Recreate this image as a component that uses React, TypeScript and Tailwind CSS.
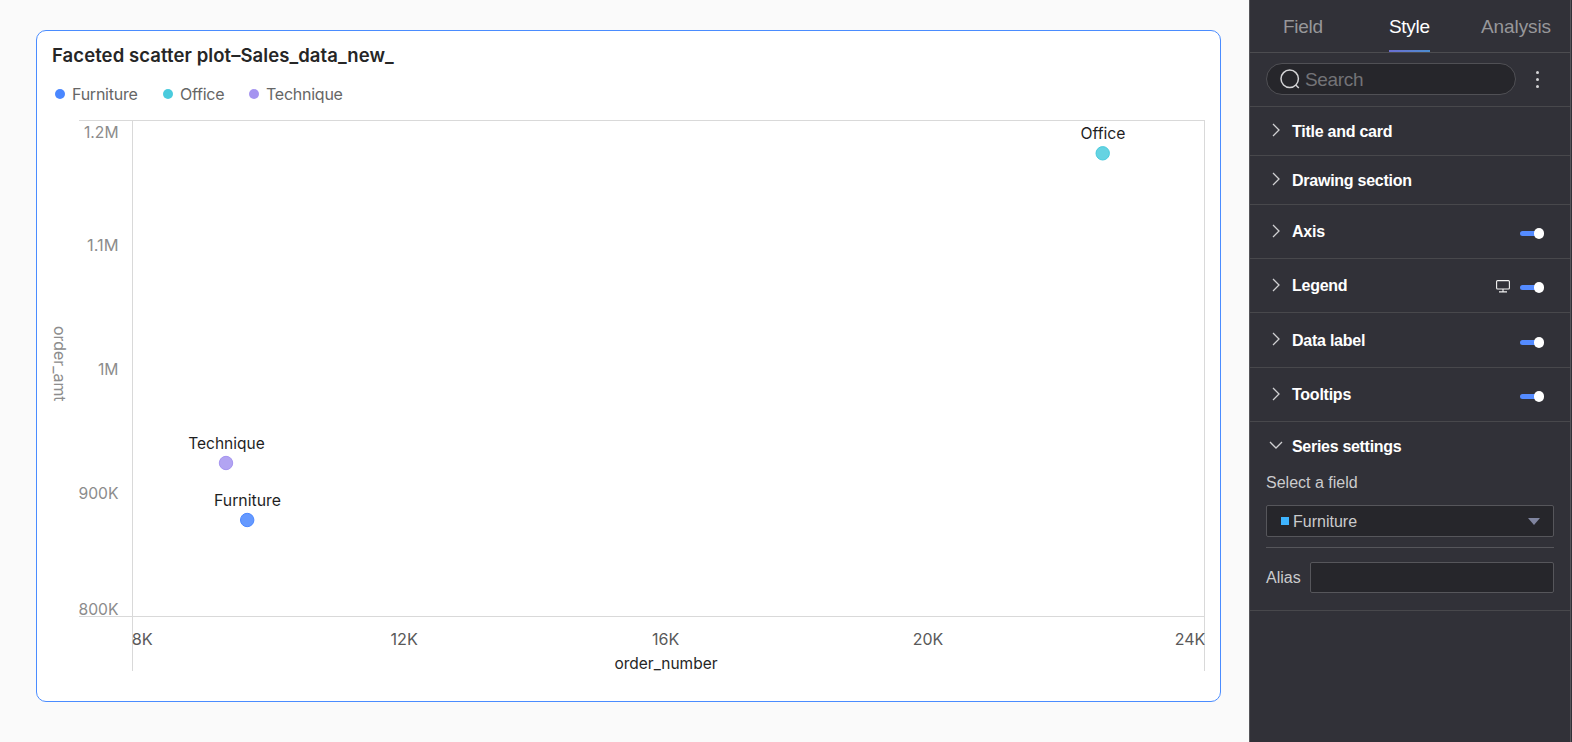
import React, { useState } from 'react';
import clsx from 'clsx';

interface SeriesPoint {
  name: string;
  color: string;
  cx: number;
  cy: number;
  labelX: number;
  labelY: number;
  labelWidth: number;
}

const SERIES: SeriesPoint[] = [
  { name: 'Technique', color: '#a594f0', cx: 226, cy: 463, labelX: 188.2, labelY: 448.5, labelWidth: 76.5 },
  { name: 'Furniture', color: '#4a87ff', cx: 247.2, cy: 520, labelX: 214, labelY: 506, labelWidth: 67 },
  { name: 'Office', color: '#4acbdd', cx: 1102.7, cy: 153.3, labelX: 1080.5, labelY: 139, labelWidth: 45 },
];

const Y_TICKS = [
  { label: '1.2M', y: 138.4, width: 34.5 },
  { label: '1.1M', y: 250.7, width: 31.5 },
  { label: '1M', y: 375, width: 20.5 },
  { label: '900K', y: 499, width: 40 },
  { label: '800K', y: 615.2, width: 40 },
];

const X_TICKS = [
  { label: '8K', x: 131.7, width: 21 },
  { label: '12K', x: 390.5, width: 27.3 },
  { label: '16K', x: 652, width: 27.3 },
  { label: '20K', x: 912.7, width: 30.5 },
  { label: '24K', x: 1174.7, width: 30.5 },
];

const ScatterChart: React.FC = () => (
  <svg
    width="1183"
    height="570"
    viewBox="37 110 1183 570"
    className="block font-['Inter',sans-serif] text-[16px]"
  >
    {/* Grid lines */}
    <path
      d="M79 120.5H1205M79 616.5H1205M132.5 120V671M1204.5 120V671"
      stroke="#d9d9d9"
      fill="none"
    />

    {Y_TICKS.map((t) => (
      <text key={t.label} x={118.5 - t.width} y={t.y} textLength={t.width} lengthAdjust="spacingAndGlyphs" fill="#8c8c8c">
        {t.label}
      </text>
    ))}
    {X_TICKS.map((t) => (
      <text key={t.label} x={t.x} y={645} textLength={t.width} lengthAdjust="spacingAndGlyphs" fill="#595959">
        {t.label}
      </text>
    ))}

    {/* Axis titles */}
    <text transform="translate(53.5 326) rotate(90)" textLength={75.5} lengthAdjust="spacingAndGlyphs" fill="#8c8c8c">
      order_amt
    </text>
    <text x={614.5} y={668.5} textLength={103} lengthAdjust="spacingAndGlyphs" fill="#262626">
      order_number
    </text>

    {SERIES.map((s) => (
      <g key={s.name}>
        <circle cx={s.cx} cy={s.cy} r={6.7} fill={s.color} fillOpacity={0.85} stroke={s.color} />
        <text x={s.labelX} y={s.labelY} textLength={s.labelWidth} lengthAdjust="spacingAndGlyphs" fill="#1f1f1f">
          {s.name}
        </text>
      </g>
    ))}
  </svg>
);

const Chevron = ({ open = false }: { open?: boolean }) => (
  <svg
    width="14"
    height="14"
    viewBox="0 0 14 14"
    fill="none"
    stroke="#d0d0d2"
    strokeWidth="1.3"
    className="-mt-[2px] shrink-0"
  >
    <path d={open ? 'M1 4L7 10L13 4' : 'M4 1L10 7L4 13'} />
  </svg>
);

const Toggle = () => {
  const [on, setOn] = useState(true);
  return (
    <button
      aria-label="Toggle"
      onClick={() => setOn(!on)}
      className={clsx('flex h-[11px] w-6 items-center', on ? 'justify-end' : 'justify-start')}
    >
      <span className={clsx('h-[5px] w-[18px] rounded-full', on ? 'bg-[#548bff]' : 'bg-[#6b6b70]')} />
      <span className="-ml-1 h-[11px] w-[10px] shrink-0 rounded-full bg-white" />
    </button>
  );
};

interface SectionProps {
  title: string;
  className: string;
  children?: React.ReactNode;
}

const Section: React.FC<SectionProps> = ({ title, className, children }) => (
  <div className={clsx('flex items-center border-b border-[#48484c] pr-[26px] pl-[19px]', className)}>
    <Chevron />
    <span className="ml-[9px] pt-px text-[16px] leading-5 font-bold tracking-[-0.25px] text-white">{title}</span>
    <div className="ml-auto flex items-center gap-[10px] pt-[4px]">{children}</div>
  </div>
);

const StylePanel: React.FC = () => (
  <aside className="flex h-full w-[322px] shrink-0 flex-col border-x border-[#55555a] bg-[#313138] font-['Liberation_Sans',Arial,sans-serif]">
    {/* Tabs */}
    <div className="flex h-[53px] shrink-0 border-b border-[#4c4c50] pl-[33px] text-[19px] leading-[53px] text-[#97979a]">
      <button className="w-[106px] text-left tracking-[-0.3px]">Field</button>
      <button className="relative w-[93px] text-left tracking-[-0.3px] text-white">
        Style
        <span className="absolute bottom-0 left-0 h-[2px] w-[41px] bg-gradient-to-r from-[#6a6ed2] to-[#4a8ccf]" />
      </button>
      <button className="-ml-px tracking-[-0.1px]">Analysis</button>
    </div>

    {/* Search */}
    <div className="flex h-[54px] shrink-0 items-center border-b border-[#48484c] pb-px pl-4">
      <div className="flex h-8 w-[250px] items-center rounded-full border border-[#505055] bg-[#26262b] pl-[13px]">
        <svg width="20" height="20" viewBox="0 0 20 20" fill="none" stroke="#d4d4d6" strokeWidth="1.5">
          <circle cx="9.7" cy="9.8" r="8.7" />
          <path d="M15.8 16L18.8 19" />
        </svg>
        <span className="ml-[5px] pt-[2px] text-[19px] tracking-[-0.35px] text-[#737377]">Search</span>
      </div>
      <div className="ml-[20px] flex flex-col gap-[4px] pt-px">
        <span className="size-[3px] rounded-full bg-[#d4d4d6]" />
        <span className="size-[3px] rounded-full bg-[#d4d4d6]" />
        <span className="size-[3px] rounded-full bg-[#d4d4d6]" />
      </div>
    </div>

    <Section title="Title and card" className="h-[49px]" />
    <Section title="Drawing section" className="h-[49px]" />
    <Section title="Axis" className="h-[54px]">
      <Toggle />
    </Section>
    <Section title="Legend" className="h-[54px]">
      <svg width="14" height="13" viewBox="0 0 14 13" fill="none" stroke="#f2f2f2" strokeWidth="1.1" className="-mt-[3px]">
        <rect x="0.6" y="0.6" width="12.8" height="8.4" rx="1" />
        <path d="M7 9V11.5M3 11.9H11" />
      </svg>
      <Toggle />
    </Section>
    <Section title="Data label" className="h-[55px]">
      <Toggle />
    </Section>
    <Section title="Tooltips" className="h-[54px]">
      <Toggle />
    </Section>

    {/* Series settings */}
    <div className="h-[189px] border-b border-[#48484c] px-4 pt-[14px] text-[16px] text-[#cbcbcd]">
      <div className="flex h-5 items-center pl-[3px]">
        <Chevron open />
        <span className="ml-[9px] pt-[2px] leading-5 font-bold tracking-[-0.3px] text-white">Series settings</span>
      </div>
      <div className="mt-[17px] leading-5">Select a field</div>
      <div className="mt-[12px] flex h-8 items-center rounded-[2px] border border-[#56565b] bg-[#26262b] pr-[13px] pl-[14px]">
        <span className="size-2 bg-[#3eb4ff]" />
        <span className="ml-[4px] pt-px">Furniture</span>
        <svg width="12" height="7" viewBox="0 0 12 7" fill="#8085a0" className="ml-auto">
          <path d="M0 0H12L6 7Z" />
        </svg>
      </div>
      <div className="mt-[10px] h-px bg-[#56565b]" />
      <div className="mt-[14px] flex items-center justify-between">
        <label htmlFor="alias">Alias</label>
        <input id="alias" className="h-[31px] w-[244px] rounded-[2px] border border-[#56565b] bg-[#26262b]" />
      </div>
    </div>
  </aside>
);

const App: React.FC = () => {
  return (
    <div className="flex h-[742px] w-[1572px] overflow-hidden bg-[#313138]">
      <main className="w-[1249px] bg-[#fafafa] pt-[30px] pl-9">
        <div className="h-[672px] w-[1185px] rounded-[10px] border border-[#4a8cff] bg-white font-['Inter',sans-serif]">
          <h1 className="pt-[11px] pl-[15px] text-[18.5px] leading-[26px] font-semibold tracking-[0.08px] text-[#262626]">
            Faceted scatter plot–Sales_data_new_
          </h1>
          {/* Legend */}
          <div className="flex h-[42px] items-center pt-[10px] pl-[18px] text-[16px] tracking-[-0.25px] text-[#666666]">
            <span className="size-[10px] rounded-full bg-[#4a87ff]" />
            <span className="ml-[7px] w-[91px]">Furniture</span>
            <span className="size-[10px] rounded-full bg-[#4acbdd]" />
            <span className="ml-[7px] w-[69px]">Office</span>
            <span className="size-[10px] rounded-full bg-[#a594f0]" />
            <span className="ml-[7px]">Technique</span>
          </div>
          <ScatterChart />
        </div>
      </main>
      <StylePanel />
    </div>
  );
};

export default App;
